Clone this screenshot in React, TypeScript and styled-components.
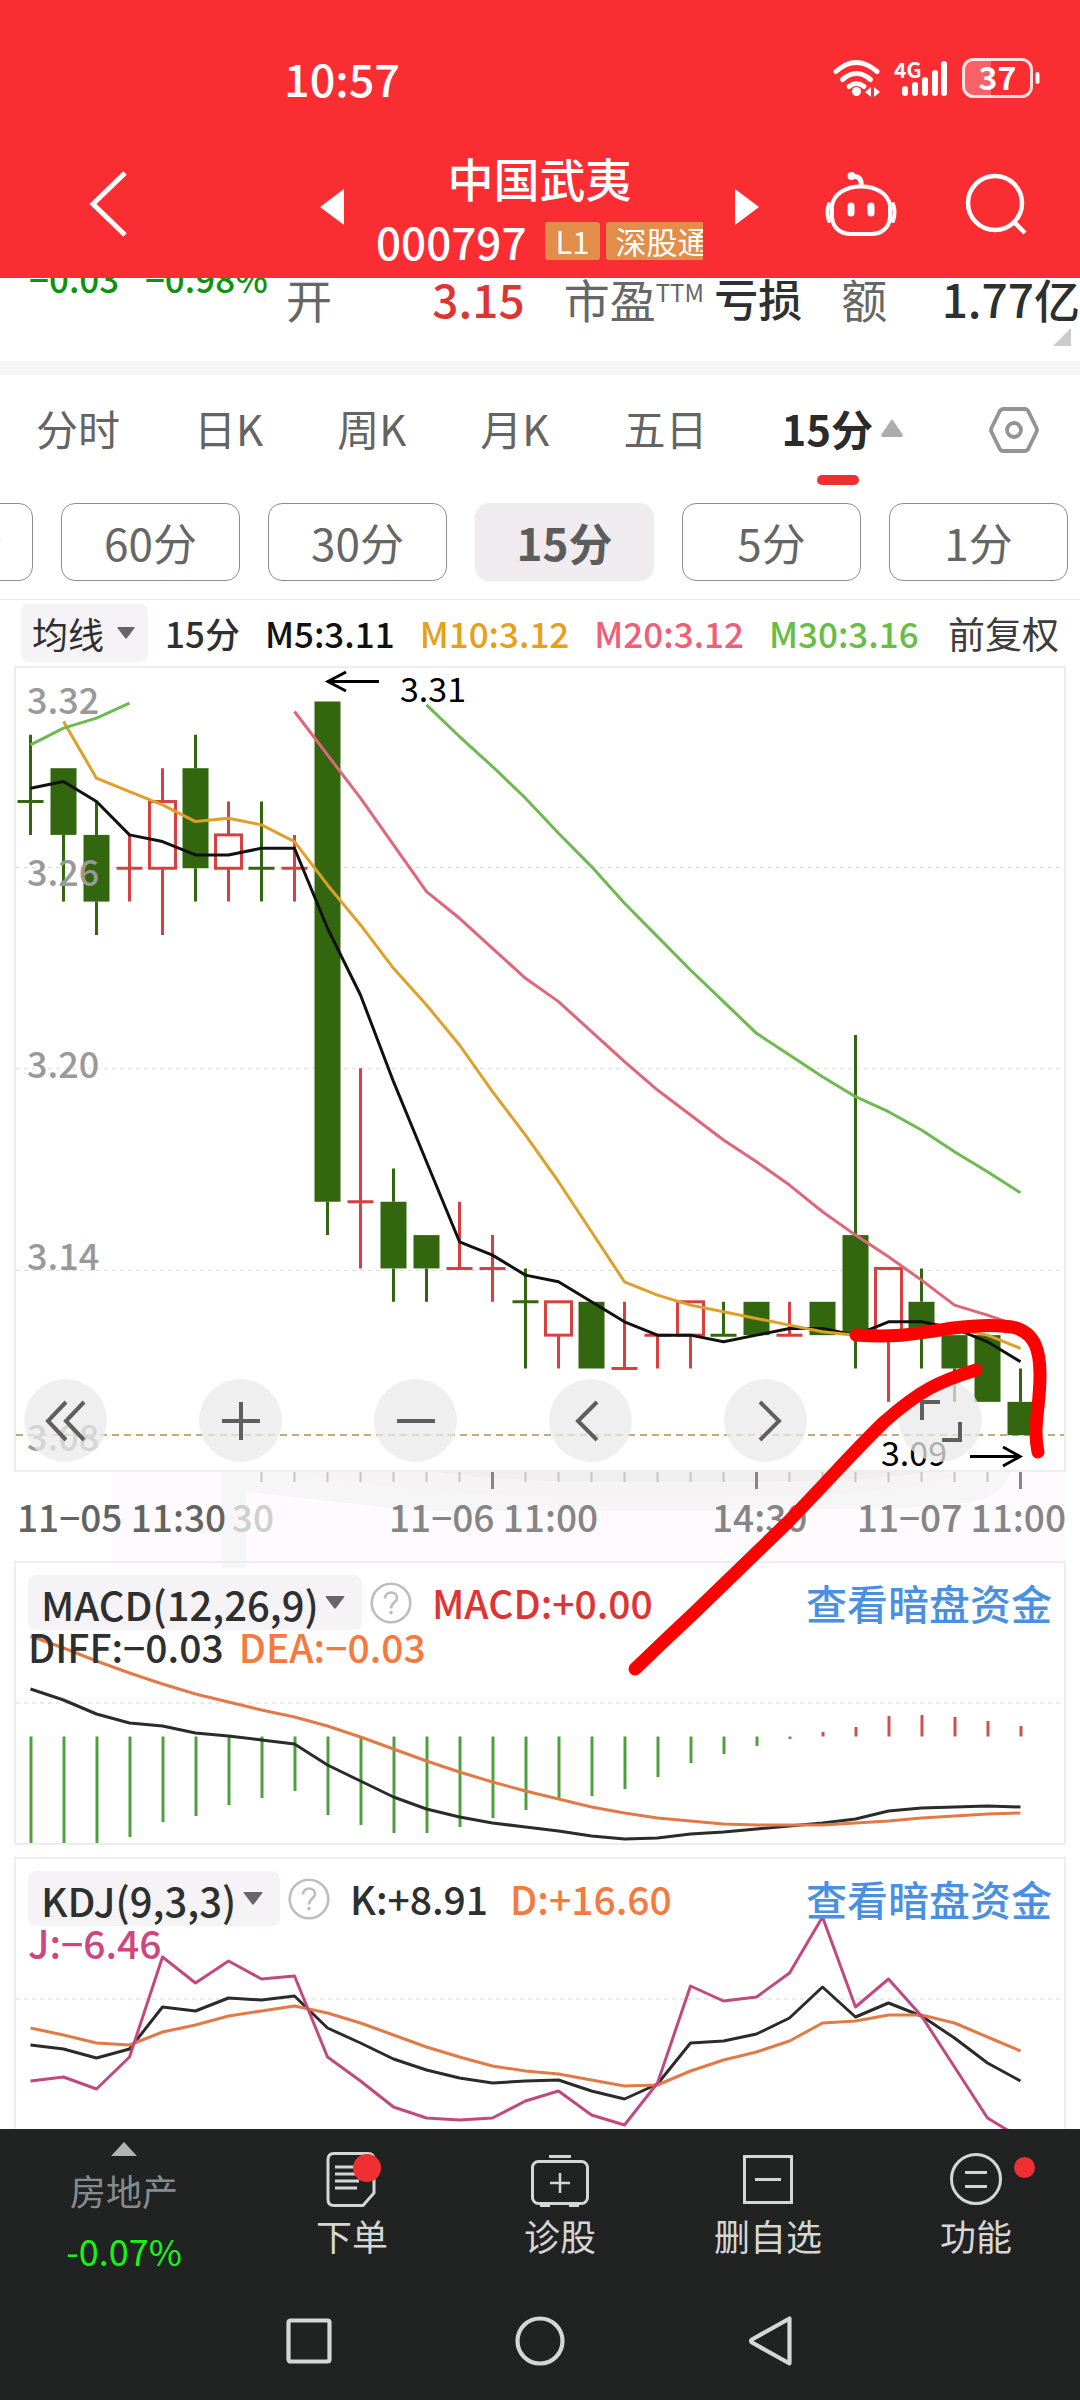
import React from "react";
import styled, { createGlobalStyle } from "styled-components";

const FONT = '"Noto Sans CJK SC", "Noto Sans", sans-serif';

const GlobalStyle = createGlobalStyle`
  *, *::before, *::after { box-sizing: border-box; }
  body { margin: 0; background: #fff; font-family: ${FONT}; }
  button, select { font-family: inherit; color: inherit; border: 0; background: none; padding: 0; margin: 0; cursor: pointer; }
  svg { display: block; }
`;

/* ---------- data ---------- */

type Candle = { o: number; c: number; h: number; l: number; up: boolean };

/* open, close, high, low in cents; "r" rising, "g" falling */
const RAW: [number, number, number, number, "r" | "g"][] = [
  [328, 328, 330, 327, "g"], [329, 327, 329, 325, "g"], [327, 325, 328, 324, "g"],
  [326, 326, 327, 325, "r"], [326, 328, 329, 324, "r"], [329, 326, 330, 325, "g"],
  [326, 327, 328, 325, "r"], [326, 326, 328, 325, "g"], [326, 326, 327, 325, "r"],
  [331, 316, 331, 315, "g"], [316, 316, 320, 314, "r"], [316, 314, 317, 313, "g"],
  [315, 314, 315, 313, "g"], [314, 314, 316, 314, "r"], [314, 314, 315, 313, "r"],
  [313, 313, 314, 311, "g"], [312, 313, 313, 311, "r"], [313, 311, 313, 311, "g"],
  [311, 311, 313, 311, "r"], [312, 312, 312, 311, "r"], [312, 313, 313, 311, "r"],
  [312, 312, 313, 312, "g"], [313, 312, 313, 312, "g"], [312, 312, 313, 312, "r"],
  [313, 312, 313, 312, "g"], [315, 312, 321, 311, "g"], [312, 314, 314, 310, "r"],
  [313, 312, 314, 311, "g"], [312, 311, 312, 310, "g"], [312, 310, 312, 310, "g"],
  [310, 309, 311, 309, "g"],
];
const CANDLES: Candle[] = RAW.map(([o, c, h, l, k]) => ({ o, c, h, l, up: k === "r" }));

const X = (i: number) => 30.5 + 33 * i;
const Y = (cents: number) => 701.5 + (331 - cents) * 33.35;

/* moving average of the closes, with the leading values that depend on earlier bars */
const average = (span: number, start: number, lead: number[]): [number, number][] => {
  const pts: [number, number][] = lead.map((v, k) => [X(start + k), Y(v)]);
  for (let i = start + lead.length; i < CANDLES.length; i++) {
    const part = CANDLES.slice(i - span + 1, i + 1);
    pts.push([X(i), Y(part.reduce((s, b) => s + b.c, 0) / span)]);
  }
  return pts;
};
const series = (ys: number[]): [number, number][] => ys.map((y, i) => [X(i), y]);
const points = (p: [number, number][]) => p.map(([x, y]) => `${x},${y}`).join(" ");

const MA5 = average(5, 0, [328.4, 328.6, 328, 327]);
const MA10 = average(10, 1, [330.4, 328.7, 328.3, 327.9, 327.4, 327.5, 327.3, 326.8]);
const MA20 = average(20, 8, [330.7, 329.4, 328.1, 326.7, 325.3, 324.5, 323.6, 322.7, 322, 321.1, 320.2]);
const MA30_EARLY: [number, number][] = [329.7, 330.2, 330.5, 330.95].map((v, i) => [X(i), Y(v)]);
const MA30 = average(30, 12, [
  330.9, 329.95, 329.05, 328.1, 327.05, 326.05, 324.95, 323.95, 322.95, 322, 321.05, 320.4, 319.75,
  319.15, 318.7, 318.15, 317.5,
]);

const DEA = series([
  1636, 1648, 1661, 1673, 1684, 1694, 1702, 1710, 1717, 1726, 1737, 1749, 1761, 1772, 1782, 1791,
  1799, 1807, 1813, 1818, 1821, 1824, 1825, 1825, 1825, 1823, 1821, 1818, 1816, 1814, 1813,
]);
const DIFF = series([
  1689, 1700, 1714, 1723, 1726, 1733, 1736, 1740, 1744, 1765, 1781, 1797, 1809, 1817, 1823, 1827,
  1831, 1836, 1839, 1838, 1834, 1832, 1829, 1826, 1823, 1819, 1811, 1808, 1807, 1806, 1807,
]);
const HIST = [
  1844, 1843, 1844, 1837, 1822, 1816, 1805, 1798, 1791, 1815, 1825, 1833, 1833, 1827, 1818, 1810,
  1800, 1796, 1789, 1777, 1763, 1754, 1746, 1739, 1732, 1727, 1716, 1715, 1717, 1721, 1726,
];
const J_LINE = series([
  2081, 2077, 2089, 2057, 1957, 1983, 1961, 1979, 1976, 2057, 2081, 2107, 2118, 2120, 2118, 2101,
  2091, 2115, 2125, 2083, 1986, 2001, 1997, 1973, 1917, 2007, 1979, 2016, 2067, 2118, 2138,
]);
const K_LINE = series([
  2045, 2049, 2058, 2049, 2007, 2011, 1998, 2000, 1996, 2028, 2043, 2059, 2070, 2078, 2083, 2081,
  2080, 2091, 2099, 2084, 2043, 2041, 2034, 2018, 1987, 2017, 2003, 2016, 2038, 2063, 2081,
]);
const D_LINE = series([
  2028, 2035, 2043, 2045, 2032, 2025, 2016, 2011, 2006, 2013, 2023, 2035, 2047, 2057, 2066, 2071,
  2074, 2080, 2086, 2085, 2071, 2060, 2052, 2041, 2023, 2021, 2015, 2015, 2023, 2037, 2051,
]);

/* ---------- header ---------- */

const Screen = styled.div`
  width: 100%;
  overflow: hidden;
  color: #2e2f2f;
`;
const Header = styled.header`
  background: #fa2d33;
  color: #fff;
`;
const StatusBar = styled.div`
  display: flex;
  align-items: center;
  justify-content: space-between;
  height: 150px;
  padding: 6px 40px 0 284px;
`;
const Clock = styled.time`
  font-size: 45px;
  line-height: 52px;
  font-weight: 500;
`;
const TitleBar = styled.div`
  display: grid;
  grid-template-columns: 1fr auto 1fr;
  height: 128px;
  padding: 0 53px 0 84px;
`;
const IconGroup = styled.div<{ $end?: boolean }>`
  display: flex;
  align-items: center;
  justify-content: ${(p) => (p.$end ? "flex-end" : "flex-start")};
  gap: 68px;
  height: 108px;
`;
const StockSwitch = styled.div`
  display: flex;
  gap: 32px;
  margin-right: 32px;
`;
const StepButton = styled.button`
  display: flex;
  align-items: center;
  height: 114px;
`;
const StockName = styled.div`
  width: 327px;
  overflow: hidden;
`;
const Name = styled.h1`
  margin: 0;
  font-size: 46px;
  font-weight: 500;
  line-height: 54px;
  text-align: center;
`;
const CodeRow = styled.div`
  display: flex;
  align-items: center;
  gap: 6px;
  height: 66px;
  margin-top: 4px;
  white-space: nowrap;
`;
const Code = styled.span`
  margin-right: 13px;
  font-size: 44px;
  font-weight: 500;
  line-height: 60px;
`;
const Badge = styled.span`
  flex: none;
  padding: 0 10px;
  border-radius: 3px;
  background: #e38d4b;
  font-size: 31px;
  line-height: 38px;
`;

/* ---------- quote strip ---------- */

const QuoteStrip = styled.section`
  position: relative;
  display: grid;
  grid-template-columns: 218px 1fr 1fr 1fr;
  column-gap: 39px;
  height: 83px;
  padding-left: 29px;
  overflow: hidden;
`;
const Change = styled.div`
  display: flex;
  justify-content: space-between;
  margin: -20px -21px 0 0;
  font-size: 35px;
  font-weight: 500;
  line-height: 40px;
  color: #0d930d;
`;
const Quote = styled.div`
  display: flex;
  justify-content: space-between;
  font-size: 46px;
  line-height: 40px;
  white-space: nowrap;
`;
const QuoteLabel = styled.span`
  display: flex;
  color: #666;
`;
const Super = styled.small`
  font-size: 24px;
  line-height: 28px;
`;
const QuoteValue = styled.span<{ $color?: string }>`
  font-weight: 500;
  color: ${(p) => p.$color ?? "#2e2f2f"};
`;
const ValueSmall = styled(QuoteValue)`
  font-size: 44px;
`;
const Corner = styled.svg`
  position: absolute;
  right: 9px;
  bottom: 15px;
`;
const Divider = styled.div`
  height: 14px;
  background: #f6f6f6;
`;

/* ---------- period tabs ---------- */

const Tabs = styled.nav`
  display: flex;
  justify-content: space-between;
  align-items: flex-start;
  height: 110px;
  padding: 0 41px 0 36px;
`;
const Tab = styled.button<{ $active?: boolean }>`
  display: flex;
  flex-direction: column;
  align-items: center;
  font-size: 42px;
  line-height: 106px;
  font-weight: ${(p) => (p.$active ? 700 : 400)};
  color: ${(p) => (p.$active ? "#2b2b2b" : "#646464")};
`;
const TabText = styled.span`
  display: flex;
  align-items: center;
  gap: 8px;
`;
const TabMark = styled.span`
  width: 42px;
  height: 10px;
  margin: -6px 8px 0 0;
  border-radius: 5px;
  background: #ee3033;
`;
const SettingsButton = styled.button`
  display: flex;
  align-items: center;
  height: 110px;
  margin-left: 12px;
`;
const Pills = styled.div`
  display: flex;
  justify-content: flex-end;
  gap: 28px;
  padding: 18px 12px 18px 0;
  border-bottom: 1px solid #e6e6e6;
`;
const Pill = styled.button<{ $active?: boolean }>`
  flex: 0 0 179px;
  height: 78px;
  border: 1px solid ${(p) => (p.$active ? "#efebef" : "#8d8d8d")};
  border-radius: 14px;
  background: ${(p) => (p.$active ? "#efebef" : "#fff")};
  font-size: 44px;
  line-height: 70px;
  font-weight: ${(p) => (p.$active ? 700 : 400)};
  color: ${(p) => (p.$active ? "#5b5c5b" : "#666")};
`;

/* ---------- indicators ---------- */

const AverageRow = styled.div`
  display: flex;
  align-items: center;
  height: 66px;
  padding: 0 21px;
  font-size: 35px;
  line-height: 56px;
  white-space: nowrap;
`;
const Averages = styled.div`
  display: flex;
  flex: 1;
  gap: 25px;
  margin-left: 17px;
`;
const Reading = styled.span<{ $color?: string }>`
  font-weight: 500;
  color: ${(p) => p.$color ?? "#2e2f2f"};
`;
const Adjust = styled.button`
  font-size: 37px;
  line-height: 56px;
  color: #3c3c3c;
`;
const Picker = styled.span<{ $small?: boolean }>`
  display: flex;
  align-items: center;
  height: ${(p) => (p.$small ? 58 : 55)}px;
  border-radius: 8px;
  background: #f6f3f6;
  select {
    appearance: none;
    outline: 0;
    height: 100%;
    padding: ${(p) => (p.$small ? "0 43px 0 11px" : "0 43px 0 13px")};
    font-size: ${(p) => (p.$small ? 36 : 40)}px;
    font-weight: ${(p) => (p.$small ? 400 : 500)};
  }
  svg {
    flex: none;
    margin-left: ${(p) => (p.$small ? -31 : -37)}px;
    margin-right: ${(p) => (p.$small ? 13 : 17)}px;
    pointer-events: none;
  }
`;

const Charts = styled.main`
  position: relative;
`;
const Panel = styled.section<{ $cut?: boolean }>`
  position: relative;
  margin: 0 14px ${(p) => (p.$cut ? 0 : 12)}px;
  border: 2px solid #ededed;
  border-bottom-width: ${(p) => (p.$cut ? 0 : 2)}px;
  height: ${(p) => (p.$cut ? 272 : 284)}px;
  padding: 12px;
  overflow: hidden;
`;
const PricePanel = styled.section`
  position: relative;
  margin: 0 14px;
  border: 2px solid #ededed;
`;
const Plot = styled.svg`
  width: 100%;
  height: auto;
`;
const BackPlot = styled(Plot)`
  position: absolute;
  inset: 0;
`;
const AxisPlot = styled(Plot)`
  overflow: visible;
`;
const ChartTools = styled.div`
  position: absolute;
  left: 8px;
  right: 82px;
  bottom: 8px;
  display: flex;
  justify-content: space-between;
`;
const RoundButton = styled.button`
  display: grid;
  place-items: center;
  width: 83px;
  height: 83px;
  border-radius: 50%;
  background: rgba(233, 233, 233, 0.75);
`;
const PanelHead = styled.div`
  position: relative;
  display: flex;
  align-items: center;
  height: 55px;
  font-size: 39px;
  line-height: 55px;
  white-space: nowrap;
`;
const HelpButton = styled.button`
  margin: 0 20px 0 8px;
`;
const HeadReadings = styled.div`
  display: flex;
  flex: 1;
  gap: 22px;
`;
const FundsLink = styled.a`
  color: #4a90e2;
  font-size: 41px;
  font-weight: 500;
  text-decoration: none;
`;
const SecondRow = styled.div`
  position: relative;
  display: flex;
  gap: 15px;
  font-size: 39px;
  line-height: 32px;
`;
const Markup = styled.svg`
  position: absolute;
  inset: 0;
  width: 100%;
  height: auto;
  pointer-events: none;
`;

/* ---------- bottom ---------- */

const Footer = styled.footer`
  background: #202321;
`;
const Actions = styled.nav`
  display: grid;
  grid-template-columns: 248fr repeat(4, 208fr);
  height: 160px;
`;
const Action = styled.button<{ $sector?: boolean }>`
  position: relative;
  display: flex;
  flex-direction: column;
  align-items: center;
  padding-top: ${(p) => (p.$sector ? 13 : 21)}px;
  font-size: 36px;
  line-height: 54px;
  color: #d6d6d6;
`;
const SectorName = styled.span`
  margin-top: 4px;
  line-height: 60px;
  color: #868b8f;
`;
const SectorChange = styled.span`
  line-height: 60px;
  color: #15f615;
`;
const Dot = styled.i`
  position: absolute;
  top: 28px;
  left: calc(50% + 38px);
  width: 21px;
  height: 21px;
  border-radius: 50%;
  background: #ee3033;
`;
const SystemNav = styled.nav`
  display: flex;
  justify-content: center;
  align-items: center;
  gap: 171px;
  height: 111px;
  padding-bottom: 7px;
`;

/* ---------- parts ---------- */

const Caret = ({ w = 18, h = 12 }: { w?: number; h?: number }) => (
  <svg width={w} height={h} viewBox="0 0 18 12" aria-hidden="true">
    <path d="M1 0h16q1 0 .6 1L10 11q-1 1-2 0L.4 1Q0 0 1 0z" fill="#666" />
  </svg>
);

const Help = ({ label }: { label: string }) => (
  <HelpButton aria-label={label}>
    <svg width="42" height="42" viewBox="0 0 42 42" fill="none" stroke="#bdbdbd" strokeWidth="2.6">
      <circle cx="21" cy="21" r="19.3" />
      <path d="M15 16.500c0-3.700 2.600-6 6-6s6 2.300 6 5.500c0 4.500-6 4.800-6 10.500" />
      <circle cx="21" cy="30.500" r="1.400" fill="#bdbdbd" strokeWidth="1" />
    </svg>
  </HelpButton>
);

const StatusIcons = () => (
  <svg width="208" height="44" viewBox="831 57 208 44" fill="none" stroke="#fff" aria-label="Wi-Fi, 4G, 37%">
    <g strokeWidth="5" strokeLinecap="round">
      <path d="M835 72.500q20-18 41 0" />
      <path d="M841.500 80.500q14-12 28 0" />
      <path d="M848 87.500q7.500-6 15 0" />
    </g>
    <circle cx="855.500" cy="92.500" r="4.500" fill="#fff" stroke="none" />
    <path d="M870 88v10l-6-5zM873 88v10l6-5z" fill="#fff" stroke="none" />
    <text x="893" y="79" fontFamily={FONT} fontSize="21" fontWeight="700" fill="#fff" stroke="none">4G</text>
    <g strokeWidth="6" strokeLinecap="round">
      <path d="M904 90v4M914 86v8M924 81v13M934 74v20M943 65v29" />
    </g>
    <path d="M972 61h18v37h-18q-9 0-9-9v-19q0-9 9-9z" fill="#fff" fillOpacity=".25" stroke="none" />
    <rect x="962.500" y="60.500" width="68" height="37" rx="10" strokeWidth="3" strokeOpacity=".85" />
    <path d="M1036.500 75v8" strokeWidth="4" strokeLinecap="round" />
    <text x="996.500" y="91" textAnchor="middle" fontFamily={FONT} fontSize="32" fontWeight="700" fill="#fff" stroke="none">37</text>
  </svg>
);

const GREEN = "#32660f";
const RED = "#d64040";

const CandleShape = ({ bar, i }: { bar: Candle; i: number }) => {
  const x = X(i);
  const color = bar.up ? RED : GREEN;
  const top = Y(Math.max(bar.o, bar.c));
  const bottom = Y(Math.min(bar.o, bar.c));
  if (bar.o === bar.c) {
    return (
      <path d={`M${x} ${Y(bar.h)}V${Y(bar.l)}M${x - 13} ${top}h26`} stroke={color} strokeWidth="3" fill="none" />
    );
  }
  return (
    <g stroke={color} strokeWidth="3" fill={bar.up ? "none" : color}>
      <path d={`M${x} ${Y(bar.h)}V${top}M${x} ${bottom}V${Y(bar.l)}`} />
      {bar.up ? (
        <rect x={x - 13} y={top} width="26" height={bottom - top} />
      ) : (
        <rect x={x - 13} y={top} width="26" height={bottom - top} stroke="none" />
      )}
    </g>
  );
};

const PRICE_LABELS: [string, number][] = [
  ["3.32", 714], ["3.26", 886], ["3.20", 1078], ["3.14", 1270], ["3.08", 1451],
];

const TOOLS: [string, string][] = [
  ["最早", "M21 2L3 21l18 19M39 2L21 21l18 19"],
  ["放大", "M21 2v38M2 21h38"],
  ["缩小", "M2 21h38"],
  ["左移", "M27 2L8 21l19 19"],
  ["右移", "M15 2l19 19-19 19"],
  ["全屏", "M2 20V2h18M40 22v18H22"],
];

const PriceChart = () => (
  <PricePanel>
    <Plot viewBox="16 668 1048 802" fill="none" aria-label="15分 K线">
      <path d="M16 867.500H1064M16 1270.500H1064" stroke="#dedede" strokeWidth="1" strokeDasharray="4 4" />
      <path d="M16 1068.500H1064" stroke="#eaeaea" strokeWidth="2" strokeDasharray="4 4" />
      <path d="M16 1435H1064" stroke="#c2aa7c" strokeWidth="2" strokeDasharray="7 5" />
      {CANDLES.map((bar, i) => <CandleShape key={i} bar={bar} i={i} />)}
      <g strokeWidth="3" strokeLinejoin="round">
        <polyline points={points(MA5)} stroke="#111" />
        <polyline points={points(MA10)} stroke="#dfa02a" />
        <polyline points={points(MA20)} stroke="#e0667a" />
        <polyline points={points(MA30_EARLY)} stroke="#6dbb50" />
        <polyline points={points(MA30)} stroke="#6dbb50" />
      </g>
      <g fontFamily={FONT} fontSize="36" fontWeight="500" fill="#999">
        {PRICE_LABELS.map(([t, y]) => <text key={t} x="27" y={y}>{t}</text>)}
      </g>
      <g fontFamily={FONT} fontSize="34" fill="#000">
        <text x="400" y="702">3.31</text>
        <text x="881" y="1466">3.09</text>
      </g>
      <path d="M379 681.500H328M346 672l-18 9.500 18 9.500M970 1456.500h50M1003 1447l17 9.500-17 9.500" stroke="#000" strokeWidth="3" />
    </Plot>
    <ChartTools>
      {TOOLS.map(([label, d]) => (
        <RoundButton key={label} aria-label={label}>
          <svg width="42" height="42" viewBox="0 0 42 42" fill="none" stroke="#5f5f5f" strokeWidth="4"><path d={d} /></svg>
        </RoundButton>
      ))}
    </ChartTools>
  </PricePanel>
);

const TimeAxis = () => (
  <AxisPlot viewBox="0 1472 1080 89" aria-label="时间轴">
    <path d="M112 1472H1065V1568H112z" fill="#fefafe" />
    <path d="M222 1472H1011C1003 1492 988 1500 965 1503C900 1511 800 1509 700 1511L420 1511L246 1492V1568H222z" fill="#f6f6f6" />
    <path d="M290 1472H960C930 1490 860 1496 700 1497C540 1500 400 1494 290 1472z" fill="#f6f3f5" />
    <path d="M440 1472H930C880 1480 800 1482 700 1482H570C510 1480 470 1477 440 1472z" fill="#efeff0" />
    {CANDLES.map((_, i) => {
      if (i < 7) return null;
      const major = i === 14 || i === 22 || i === 30;
      return (
        <path
          key={i}
          d={`M${X(i)} 1472V${major ? 1489 : 1482}`}
          stroke={major ? "#858585" : "#c4c4c4"}
          strokeWidth={major ? 3 : 2}
        />
      );
    })}
    <g fontFamily={FONT} fontSize="37" fontWeight="500" fill="#858585">
      <text x="17" y="1532" fill="#626462">11−05 11:30</text>
      <text x="274" y="1532" textAnchor="end" fill="#cfcfcf">30</text>
      <text x="389" y="1532">11−06 11:00</text>
      <text x="712" y="1532">14:30</text>
      <text x="1066" y="1532" textAnchor="end">11−07 11:00</text>
    </g>
  </AxisPlot>
);

const MacdPanel = () => (
  <Panel>
    <BackPlot viewBox="16 1563 1048 280" fill="none" aria-label="MACD">
      <path d="M16 1703H1064" stroke="#eaeaea" strokeWidth="2" strokeDasharray="4 4" />
      {HIST.map((y, i) => (
        <path key={i} d={`M${X(i) + 0.5} 1736.500V${y}`} stroke={y > 1736.5 ? "#4f9f40" : "#cf5050"} strokeWidth="3" />
      ))}
      <g strokeWidth="3" strokeLinejoin="round">
        <polyline points={points(DIFF)} stroke="#2b2b2b" />
        <polyline points={points(DEA)} stroke="#e27a48" />
      </g>
    </BackPlot>
    <PanelHead>
      <Picker>
        <select aria-label="指标一"><option>MACD(12,26,9)</option></select>
        <Caret w={20} h={13} />
      </Picker>
      <Help label="MACD 说明" />
      <HeadReadings><Reading $color="#dd3434">MACD:+0.00</Reading></HeadReadings>
      <FundsLink href="#funds">查看暗盘资金</FundsLink>
    </PanelHead>
    <SecondRow>
      <Reading>DIFF:−0.03</Reading>
      <Reading $color="#f47a40">DEA:−0.03</Reading>
    </SecondRow>
  </Panel>
);

const KdjPanel = () => (
  <Panel $cut>
    <BackPlot viewBox="16 1859 1048 270" fill="none" aria-label="KDJ">
      <path d="M16 1999H1064" stroke="#eaeaea" strokeWidth="2" strokeDasharray="4 4" />
      <g strokeWidth="3" strokeLinejoin="round">
        <polyline points={points(K_LINE)} stroke="#2b2b2b" />
        <polyline points={points(D_LINE)} stroke="#e27a48" />
        <polyline points={points(J_LINE)} stroke="#c04a80" />
      </g>
    </BackPlot>
    <PanelHead>
      <Picker>
        <select aria-label="指标二"><option>KDJ(9,3,3)</option></select>
        <Caret w={20} h={13} />
      </Picker>
      <Help label="KDJ 说明" />
      <HeadReadings>
        <Reading>K:+8.91</Reading>
        <Reading $color="#f47a40">D:+16.60</Reading>
      </HeadReadings>
      <FundsLink href="#funds">查看暗盘资金</FundsLink>
    </PanelHead>
    <SecondRow><Reading $color="#cc4680">J:−6.46</Reading></SecondRow>
  </Panel>
);

const PERIODS = ["120分", "60分", "30分", "15分", "5分", "1分"];

export default function App() {
  return (
    <Screen>
      <GlobalStyle />
      <Header>
        <StatusBar>
          <Clock>10:57</Clock>
          <StatusIcons />
        </StatusBar>
        <TitleBar>
          <IconGroup>
            <button aria-label="返回">
              <svg width="48" height="68" viewBox="0 0 48 68" fill="none" stroke="#fff" strokeWidth="5"><path d="M41 3L9 34l32 31" /></svg>
            </button>
          </IconGroup>
          <StockSwitch>
            <StepButton aria-label="上一只">
              <svg width="24" height="36" viewBox="0 0 24 36" fill="#fff"><path d="M24 0v36L0 18z" /></svg>
            </StepButton>
            <StockName>
              <Name>中国武夷</Name>
              <CodeRow>
                <Code>000797</Code>
                <Badge>L1</Badge>
                <Badge>深股通</Badge>
              </CodeRow>
            </StockName>
            <StepButton aria-label="下一只">
              <svg width="24" height="36" viewBox="0 0 24 36" fill="#fff"><path d="M0 0v36l24-18z" /></svg>
            </StepButton>
          </StockSwitch>
          <IconGroup $end>
            <button aria-label="智能助手">
              <svg width="72" height="66" viewBox="0 0 72 66" fill="none" stroke="#fff" strokeWidth="4">
                <path d="M36 15.500c15 0 27 7 29 19v12c-1 11-9 16.500-19 16.500H26C16 63 8 57.500 7 46.500v-12c2-12 14-19 29-19z" />
                <path d="M4 33q-3 8 0 17M68 33q3 8 0 17" strokeLinecap="round" />
                <path d="M36 15c1-5-1-9-6-9.500" strokeWidth="5" />
                <circle cx="26.500" cy="5" r="4" fill="#fff" stroke="none" />
                <path d="M26 35v7M46 35v7" strokeWidth="7" strokeLinecap="round" />
              </svg>
            </button>
            <button aria-label="搜索">
              <svg width="62" height="62" viewBox="0 0 62 62" fill="none" stroke="#fff" strokeWidth="4.500">
                <circle cx="30" cy="30" r="27" />
                <path d="M49 49l11 11" />
              </svg>
            </button>
          </IconGroup>
        </TitleBar>
      </Header>

      <QuoteStrip>
        <Change><span>−0.03</span><span>−0.98%</span></Change>
        <Quote><QuoteLabel>开</QuoteLabel><QuoteValue $color="#dd3434">3.15</QuoteValue></Quote>
        <Quote><QuoteLabel>市盈<Super>TTM</Super></QuoteLabel><ValueSmall>亏损</ValueSmall></Quote>
        <Quote><QuoteLabel>额</QuoteLabel><QuoteValue>1.77亿</QuoteValue></Quote>
        <Corner width="18" height="18" viewBox="0 0 18 18" aria-hidden="true"><path d="M18 0v18H0z" fill="#cbcbcb" /></Corner>
      </QuoteStrip>
      <Divider />

      <Tabs>
        <Tab>分时</Tab>
        <Tab>日K</Tab>
        <Tab>周K</Tab>
        <Tab>月K</Tab>
        <Tab>五日</Tab>
        <Tab $active>
          <TabText>
            15分
            <svg width="22" height="18" viewBox="0 0 22 18" aria-hidden="true"><path d="M11 0L22 16q0 2-2 2H2q-2 0-2-2z" fill="#aeaaae" /></svg>
          </TabText>
          <TabMark />
        </Tab>
        <SettingsButton aria-label="设置">
          <svg width="50" height="46" viewBox="0 0 50 46" fill="none" stroke="#949494" strokeWidth="3.800">
            <path d="M14 2h22q2 0 3 1.700L47.500 21q1 2 0 4L39 42.300Q38 44 36 44H14q-2 0-3-1.700L2.500 25q-1-2 0-4L11 3.700Q12 2 14 2z" />
            <circle cx="25" cy="23" r="7" />
          </svg>
        </SettingsButton>
      </Tabs>
      <Pills>
        {PERIODS.map((p) => <Pill key={p} $active={p === "15分"}>{p}</Pill>)}
      </Pills>

      <AverageRow>
        <Picker $small>
          <select aria-label="主图指标"><option>均线</option></select>
          <Caret />
        </Picker>
        <Averages>
          <Reading>15分</Reading>
          <Reading $color="#111">M5:3.11</Reading>
          <Reading $color="#e5a01c">M10:3.12</Reading>
          <Reading $color="#ee5f78">M20:3.12</Reading>
          <Reading $color="#68bd46">M30:3.16</Reading>
        </Averages>
        <Adjust>前复权</Adjust>
      </AverageRow>

      <Charts>
        <PriceChart />
        <TimeAxis />
        <MacdPanel />
        <KdjPanel />
        <Markup viewBox="0 666 1080 1463" fill="none" stroke="#ff0000" strokeWidth="13" strokeLinecap="round" strokeLinejoin="round" aria-hidden="true">
          <path d="M856 1335C895 1338 915 1334 953 1328C985 1324 1000 1325 1012 1327C1036 1332 1040 1352 1040 1375C1040 1400 1036 1415 1036 1433Q1036 1442 1038 1452" />
          <path d="M976 1370C940 1381 920 1390 884 1422C850 1455 830 1479 788 1522L695 1612Q665 1640 635 1669" />
        </Markup>
      </Charts>

      <Footer>
        <Actions>
          <Action $sector>
            <svg width="26" height="14" viewBox="0 0 26 14" aria-hidden="true"><path d="M13 0l13 14H0z" fill="#b3b3b3" /></svg>
            <SectorName>房地产</SectorName>
            <SectorChange>-0.07%</SectorChange>
          </Action>
          <Action>
            <svg width="58" height="58" viewBox="0 0 58 58" fill="none" stroke="#d6d6d6" strokeWidth="3">
              <path d="M11 3.500h34q6 0 6 6V43L40 55.500H11q-6 0-6-6v-40q0-6 6-6z" />
              <path d="M12 17h22M12 24h22M12 31h24M12 38h22" />
              <circle cx="44" cy="18" r="14" fill="#ee3033" stroke="none" />
            </svg>
            <span>下单</span>
          </Action>
          <Action>
            <svg width="58" height="58" viewBox="0 0 58 58" fill="none" stroke="#d6d6d6" strokeWidth="3">
              <path d="M18 6.500h22" />
              <rect x="1.500" y="11.500" width="55" height="42" rx="6" />
              <path d="M29 23v20M19 33h20" strokeWidth="2.500" />
              <path d="M9 55.500h10M38 55.500h10" />
            </svg>
            <span>诊股</span>
          </Action>
          <Action>
            <svg width="58" height="58" viewBox="0 0 58 58" fill="none" stroke="#d6d6d6" strokeWidth="3">
              <rect x="5.500" y="6.500" width="47" height="46" />
              <path d="M16 29.500h26" />
            </svg>
            <span>删自选</span>
          </Action>
          <Action>
            <svg width="58" height="58" viewBox="0 0 58 58" fill="none" stroke="#d6d6d6" strokeWidth="3">
              <circle cx="29" cy="29" r="24.500" />
              <path d="M18 22.500h22M18 36.500h22" />
            </svg>
            <span>功能</span>
            <Dot />
          </Action>
        </Actions>
        <SystemNav>
          <button aria-label="最近任务">
            <svg width="60" height="60" viewBox="0 0 60 60" fill="none" stroke="#d6d6d6" strokeWidth="4.200"><rect x="9.500" y="9.500" width="41" height="41" rx="2" /></svg>
          </button>
          <button aria-label="主屏幕">
            <svg width="60" height="60" viewBox="0 0 60 60" fill="none" stroke="#d6d6d6" strokeWidth="4.200"><circle cx="30" cy="30" r="22.500" /></svg>
          </button>
          <button aria-label="后退">
            <svg width="60" height="60" viewBox="0 0 60 60" fill="none" stroke="#d6d6d6" strokeWidth="4.200" strokeLinejoin="round"><path d="M48.500 7.500v45L11 31.500q-2-1.500 0-3z" /></svg>
          </button>
        </SystemNav>
      </Footer>
    </Screen>
  );
}
